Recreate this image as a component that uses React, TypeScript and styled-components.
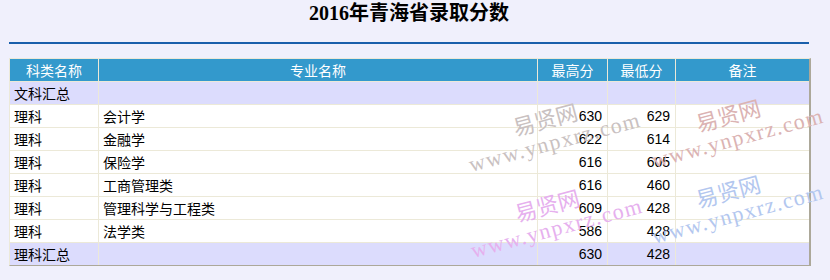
import React from "react";
import styled, { createGlobalStyle } from "styled-components";

const GlobalStyle = createGlobalStyle`
  html, body {
    margin: 0;
    padding: 0;
    background: #f0f0fc;
  }
  body {
    font-family: "Liberation Sans", "Noto Sans CJK SC", sans-serif;
  }
`;

type Row = {
  kind: string;
  major: string;
  high: string;
  low: string;
  total?: boolean;
};

const rows: Row[] = [
  { kind: "文科汇总", major: "", high: "", low: "", total: true },
  { kind: "理科", major: "会计学", high: "630", low: "629" },
  { kind: "理科", major: "金融学", high: "622", low: "614" },
  { kind: "理科", major: "保险学", high: "616", low: "605" },
  { kind: "理科", major: "工商管理类", high: "616", low: "460" },
  { kind: "理科", major: "管理科学与工程类", high: "609", low: "428" },
  { kind: "理科", major: "法学类", high: "586", low: "428" },
  { kind: "理科汇总", major: "", high: "630", low: "428", total: true },
];

const marks = [
  { left: 463, top: 104, color: "#c9c1c1" },
  { left: 646, top: 100, color: "#dbb3b3" },
  { left: 465, top: 190, color: "#e6b0ee" },
  { left: 646, top: 176, color: "#b3c7ef" },
];

const App = () => {
  return (
    <Page>
      <GlobalStyle />
      <Title>2016年青海省录取分数</Title>
      <Rule />
      <Table>
        <colgroup>
          <col style={{ width: 89 }} />
          <col style={{ width: 439 }} />
          <col style={{ width: 70 }} />
          <col style={{ width: 68 }} />
          <col style={{ width: 133 }} />
        </colgroup>
        <thead>
          <tr>
            <Th>科类名称</Th>
            <Th>专业名称</Th>
            <Th>最高分</Th>
            <Th>最低分</Th>
            <Th>备注</Th>
          </tr>
        </thead>
        <tbody>
          {rows.map((r, i) => (
            <Tr key={i} $total={r.total}>
              <Td>{r.kind}</Td>
              <Td>{r.major}</Td>
              <Num>{r.high}</Num>
              <Num>{r.low}</Num>
              <Td></Td>
            </Tr>
          ))}
        </tbody>
      </Table>
      {marks.map((m, i) => (
        <Watermark key={i} $left={m.left} $top={m.top} $color={m.color}>
          <MarkName>易贤网</MarkName>
          <MarkUrl>www.ynpxrz.com</MarkUrl>
        </Watermark>
      ))}
    </Page>
  );
};

const Page = styled.div`
  position: relative;
  width: 830px;
  height: 280px;
  overflow: hidden;
  padding: 0 21px 0 9px;
  box-sizing: border-box;
`;

const Title = styled.h1`
  margin: 0;
  height: 26px;
  line-height: 26px;
  text-align: center;
  font-family: "Liberation Serif", "Noto Sans CJK SC", serif;
  font-size: 20px;
  font-weight: bold;
  color: #000;
`;

const Rule = styled.div`
  margin-top: 16px;
  height: 2px;
  background: #1a5fab;
`;

const Table = styled.table`
  margin-top: 14px;
  width: 800px;
  table-layout: fixed;
  border-collapse: separate;
  border-spacing: 0;
  border-top: 1px solid #ece9d8;
  border-left: 1px solid #ece9d8;
  border-right: 2px solid #aca899;
  border-bottom: 1px solid #aca899;
  font-size: 14px;
  color: #000;
  box-sizing: border-box;
`;

const Th = styled.th`
  height: 22px;
  padding: 0 4px;
  background: #3399cc;
  color: #fff;
  font-weight: normal;
  text-align: center;
  border-right: 1px solid #ece9d8;
  border-bottom: 1px solid #ece9d8;
  &:last-child {
    border-right: none;
  }
`;

const Tr = styled.tr<{ $total?: boolean }>`
  background: ${(p) => (p.$total ? "#dcdcfd" : "#ffffff")};
  &:last-child td {
    border-bottom: none;
  }
`;

const Td = styled.td`
  height: 22px;
  padding: 0 4px;
  white-space: nowrap;
  border-right: 1px solid #ece9d8;
  border-bottom: 1px solid #ece9d8;
  &:last-child {
    border-right: none;
  }
`;

const Num = styled(Td)`
  text-align: right;
  padding-right: 5px;
`;

const Watermark = styled.div<{ $left: number; $top: number; $color: string }>`
  position: absolute;
  left: ${(p) => p.$left}px;
  top: ${(p) => p.$top}px;
  width: 175px;
  transform: rotate(-15deg);
  transform-origin: center;
  color: ${(p) => p.$color};
  pointer-events: none;
  font-family: "Liberation Serif", "Noto Sans CJK SC", serif;
`;

const MarkName = styled.div`
  padding-left: 52px;
  font-size: 22px;
  line-height: 26px;
  font-family: "Noto Sans CJK SC", serif;
`;

const MarkUrl = styled.div`
  font-size: 22px;
  line-height: 26px;
  letter-spacing: 1.5px;
  white-space: nowrap;
`;

export default App;
